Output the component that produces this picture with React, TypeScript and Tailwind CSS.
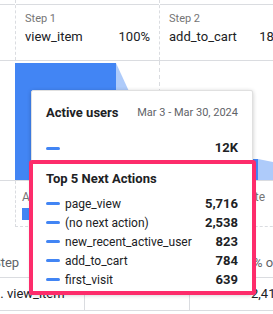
const actions = [
  { name: "page_view", value: "5,716" },
  { name: "(no next action)", value: "2,538" },
  { name: "new_recent_active_user", value: "823" },
  { name: "add_to_cart", value: "784" },
  { name: "first_visit", value: "639" },
];

function StepHeader({ step, event, pct }: { step: string; event: string; pct: string }) {
  return (
    <div className="w-[144px] shrink-0 border-l border-dashed border-[#dadce0] pt-[4px]">
      <div className="h-full border-t border-[#dadce0] pt-[7px] px-[9px]">
        <div className="text-[11px] leading-[14px] text-[#757575]">{step}</div>
        <div className="mt-[2px] flex justify-between text-[13px] leading-[18px] text-[#202124] whitespace-nowrap">
          <span>{event}</span>
          <span>{pct}</span>
        </div>
      </div>
    </div>
  );
}

function FunnelChart() {
  return (
    <svg width="273" height="120" className="block shrink-0">
      <line x1="159.5" y1="0" x2="159.5" y2="119" stroke="#dadce0" strokeDasharray="4 3" />
      <rect x="15" y="2" width="101" height="117" fill="#4285f4" />
      <polygon points="116,2 160,98 160,119 116,119" fill="#aecbfa" />
      <rect x="160" y="98" width="98" height="21" fill="#4285f4" />
      <polygon points="258,98 273,101 273,119 258,119" fill="#aecbfa" />
      <line x1="0" y1="119.5" x2="273" y2="119.5" stroke="#dadce0" />
    </svg>
  );
}

export default function App() {
  return (
    <div className="relative w-[273px] h-[314px] overflow-hidden bg-white font-['Roboto',sans-serif]">
      {/* funnel step headers */}
      <div className="flex h-[61px] border-b border-[#dadce0]">
        <div className="w-[15px] shrink-0 pt-[4px]">
          <div className="h-full border-t border-[#dadce0]" />
        </div>
        <StepHeader step="Step 1" event="view_item" pct="100%" />
        <StepHeader step="Step 2" event="add_to_cart" pct="18.4%" />
      </div>

      <FunnelChart />

      {/* below-bar labels */}
      <div className="flex h-[46px]">
        <div className="w-[15px] shrink-0" />
        <div className="w-[144px] shrink-0 border-l border-b border-dashed border-[#dadce0] pl-[6px] pt-[8px]">
          <div className="text-[12px] leading-[16px] text-[#757575] whitespace-nowrap">Abandonments</div>
          <div className="mt-[3px] h-[12px] w-[50px] bg-[#4285f4]" />
        </div>
        <div className="w-[144px] shrink-0 border-l border-b border-dashed border-[#dadce0] pl-[6px] pt-[8px]">
          <div className="text-[12px] leading-[16px] text-[#757575] whitespace-nowrap">Abandonment rate</div>
        </div>
      </div>

      {/* table */}
      <div className="mt-[21px]">
        <div className="flex h-[30px] items-center border-b border-[#dadce0] text-[13px] text-[#5f6368] whitespace-nowrap">
          <div className="w-[92px] shrink-0 -ml-[7px]">Step</div>
          <div className="w-[105px] shrink-0">Users</div>
          <div className="pl-[63px]">% of total</div>
        </div>
        <div className="flex h-[33px] border-b border-[#dadce0] text-[13px] text-[#202124] whitespace-nowrap">
          <div className="w-[92px] shrink-0 flex items-center border-r border-[#dadce0] -ml-[7px] pr-[7px]">1. view_item</div>
          <div className="w-[105px] shrink-0 border-r border-[#dadce0]" />
          <div className="flex items-center pl-[61px]">2,415</div>
        </div>
      </div>

      {/* tooltip */}
      <div className="absolute left-[31px] top-[90px] w-[222px] h-[204px] rounded-[2px] border border-[#e0e0e0] bg-white px-[14px] shadow-[0_1px_4px_rgba(0,0,0,0.22)]">
        <div className="mt-[13px] flex items-center justify-between whitespace-nowrap">
          <span className="text-[13px] leading-[18px] font-bold text-[#202124]">Active users</span>
          <span className="text-[11px] leading-[18px] text-[#5f6368]">Mar 3 - Mar 30, 2024</span>
        </div>
        <div className="mt-[18px] flex items-center justify-between h-[16px]">
          <span className="h-[3px] w-[14px] rounded-full bg-[#4285f4]" />
          <span className="text-[13px] font-bold text-[#202124]">12K</span>
        </div>
        <div className="mt-[14px] text-[13px] leading-[18px] font-bold text-[#202124] whitespace-nowrap">Top 5 Next Actions</div>
        <div className="mt-[6px] flex flex-col">
          {actions.map((a) => (
            <div key={a.name} className="flex items-center h-[19px] text-[12px] text-[#202124] whitespace-nowrap">
              <span className="h-[3px] w-[14px] rounded-full bg-[#4285f4]" />
              <span className="ml-[5px] flex-1">{a.name}</span>
              <span className="font-bold text-[13px]">{a.value}</span>
            </div>
          ))}
        </div>
      </div>

      {/* highlight annotation */}
      <div className="absolute left-[29px] top-[160px] w-[227px] h-[135px] rounded-[3px] border-[4px] border-[#fd2c6b]" />
    </div>
  );
}
